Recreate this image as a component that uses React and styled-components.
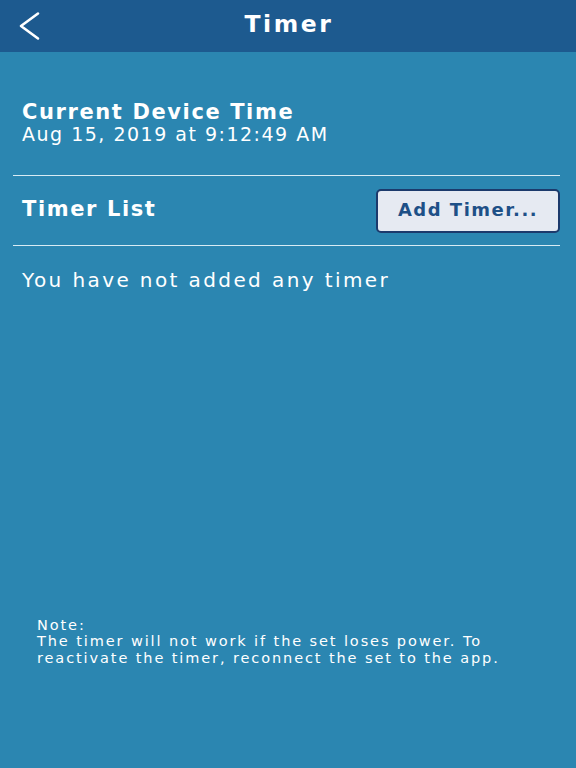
import React from "react";
import styled, { createGlobalStyle } from "styled-components";

const Global = createGlobalStyle`
  html, body { margin: 0; padding: 0; }
  body { background: #2b86b1; font-family: "DejaVu Sans", "Noto Sans", sans-serif; color: #fff; }
`;

const Page = styled.div`
  width: 576px;
  height: 768px;
  display: flex;
  flex-direction: column;
  background: #2b86b1;
  overflow: hidden;
`;

const Header = styled.header`
  height: 52px;
  background: #1d5a8f;
  display: flex;
  align-items: center;
  justify-content: center;
  position: relative;
  flex-shrink: 0;
`;

const Back = styled.button`
  position: absolute;
  left: 17px;
  top: 11px;
  width: 24px;
  height: 30px;
  background: none;
  border: 0;
  padding: 0;
  display: flex;
  align-items: center;
  justify-content: center;
`;

const Title = styled.h1`
  margin: 0 0 5px 2px;
  font-size: 23.5px;
  font-weight: 700;
  letter-spacing: 2.6px;
`;

const Content = styled.main`
  flex: 1;
  display: flex;
  flex-direction: column;
  padding: 0 16px 0 13px;
`;

const Section = styled.section`
  padding: 48px 9px 31px;
  display: flex;
  flex-direction: column;
  border-bottom: 1px solid #d8ebf4;
`;

const Heading = styled.div`
  font-size: 21px;
  font-weight: 700;
  line-height: 24px;
  letter-spacing: 1.6px;
`;

const Value = styled.div`
  font-size: 19px;
  line-height: 20px;
  font-weight: 400;
  letter-spacing: 1.5px;
`;

const Row = styled.div`
  height: 69px;
  display: flex;
  align-items: center;
  justify-content: space-between;
  padding-left: 9px;
  border-bottom: 1px solid #d8ebf4;
`;

const RowHeading = styled(Heading)`
  margin-bottom: 3px;
`;

const AddButton = styled.button`
  width: 184px;
  height: 44px;
  box-sizing: border-box;
  background: #e6eaf2;
  border: 2px solid #1c3a6c;
  border-radius: 5px;
  color: #1e5087;
  font-family: inherit;
  font-size: 18px;
  font-weight: 700;
  letter-spacing: 1.5px;
  padding: 0 0 3px;
`;

const Empty = styled.p`
  margin: 20px 0 0 9px;
  font-size: 20px;
  line-height: 28px;
  letter-spacing: 2.4px;
`;

const Note = styled.div`
  margin-top: auto;
  margin-bottom: 102px;
  padding-left: 24px;
  font-size: 14.5px;
  line-height: 16.5px;
  letter-spacing: 1.9px;
`;

export default function App() {
  return (
    <Page>
      <Global />
      <Header>
        <Back aria-label="Back">
          <svg width="24" height="30" viewBox="0 0 24 30">
            <path d="M21 2.5 L4 15 L21 27.5" fill="none" stroke="#fff" strokeWidth="2.6" strokeLinecap="round" strokeLinejoin="round" />
          </svg>
        </Back>
        <Title>Timer</Title>
      </Header>
      <Content>
        <Section>
          <Heading>Current Device Time</Heading>
          <Value>Aug 15, 2019 at 9:12:49 AM</Value>
        </Section>
        <Row>
          <RowHeading>Timer List</RowHeading>
          <AddButton>Add Timer...</AddButton>
        </Row>
        <Empty>You have not added any timer</Empty>
        <Note>
          Note:
          <br />
          The timer will not work if the set loses power. To
          <br />
          reactivate the timer, reconnect the set to the app.
        </Note>
      </Content>
    </Page>
  );
}
